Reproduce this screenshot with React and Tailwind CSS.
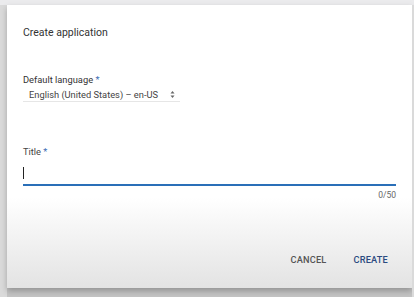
export default function App() {
  return (
    <div className="w-[414px] h-[297px] bg-[#c4c4c4] overflow-hidden relative font-['Roboto',sans-serif]">
      <div className="h-[5px] bg-[#ebebed]" />
      <div className="flex h-[292px]">
        <div className="w-[7px] bg-[#dadada]" />
        <div className="w-[405px] h-[283px] bg-gradient-to-b from-white from-[68%] to-[#e3e3e3] shadow-[0_3px_6px_rgba(0,0,0,0.25)] px-4 flex flex-col">
          <div className="pt-[22px] text-[10.5px] leading-[12px] text-[#333] whitespace-nowrap">Create application</div>

          <div className="mt-[35px] text-[9.3px] leading-[11px] text-[#333] whitespace-nowrap">
            Default language <span className="text-[#3c6cb4]">*</span>
          </div>
          <div className="mt-[3px] w-[157px] h-[14px] border-b border-[#e6e6e6] flex items-center justify-between pl-[6px] pr-[5px]">
            <span className="text-[9.3px] leading-[11px] text-[#444] whitespace-nowrap">English (United States) – en-US</span>
            <svg width="5" height="9" viewBox="0 0 5 9" className="text-[#666]">
              <path d="M0.5 3.5 L2.5 1 L4.5 3.5 Z" fill="currentColor" />
              <path d="M0.5 5.5 L2.5 8 L4.5 5.5 Z" fill="currentColor" />
            </svg>
          </div>

          <div className="mt-[44px] text-[9.3px] leading-[11px] text-[#444] whitespace-nowrap">
            Title <span className="text-[#3c6cb4]">*</span>
          </div>
          <div className="mt-[3px] h-[26px] pt-[7px] border-b-2 border-[#2a6fb8] flex items-start">
            <div className="w-px h-[12px] bg-[#222]" />
          </div>
          <div className="mt-[4px] text-right text-[8.5px] leading-[10px] text-[#666]">0/50</div>

          <div className="mt-auto mb-[22px] flex justify-end gap-[27px] pr-[8px]">
            <span className="text-[9.2px] leading-[12px] font-medium tracking-[0.2px] text-[#555]">CANCEL</span>
            <span className="text-[9.2px] leading-[12px] font-medium tracking-[0.2px] text-[#2b4a80]">CREATE</span>
          </div>
        </div>
        <div className="w-[2px] bg-[#dadada]" />
      </div>
    </div>
  );
}
